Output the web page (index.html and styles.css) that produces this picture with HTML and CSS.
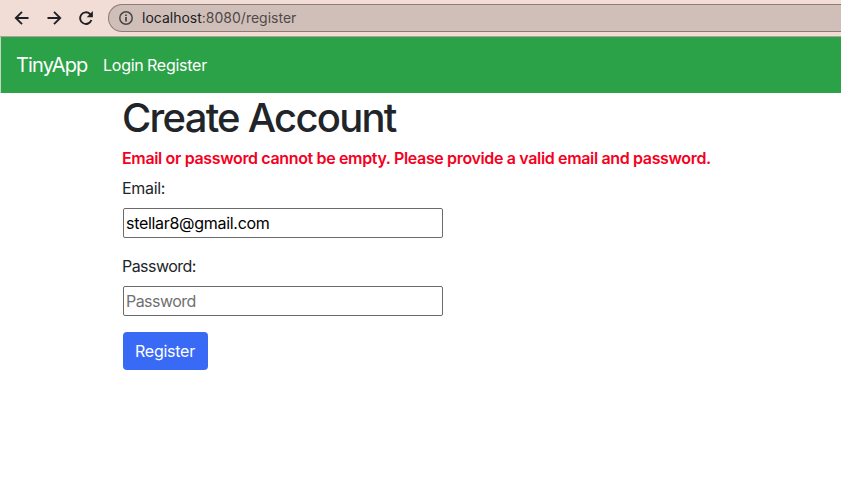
FILE: index.html
```html
<!DOCTYPE html>
<html lang="en">
<head>
<meta charset="utf-8">
<title>TinyApp</title>
<link rel="stylesheet" href="styles.css">
</head>
<body>
<header class="browser">
  <svg class="icon back" viewBox="0 0 16 16"><path d="M14.5 8H2M8 1.8 1.8 8 8 14.2"/></svg>
  <svg class="icon forward" viewBox="0 0 16 16"><path d="M1.5 8H14M8 1.8 14.2 8 8 14.2"/></svg>
  <svg class="icon reload" viewBox="0 0 16 16"><path d="M13.4 10A5.8 5.8 0 1 1 12 4L14 6"/><path class="solid" d="M14.9 1v6.2H8.7z"/></svg>
  <div class="address">
    <svg class="info" viewBox="0 0 14 14"><circle cx="7" cy="7" r="6.2"/><path class="stem" d="M7 6v4.4M7 3.4v1.7"/></svg>
    <span class="url">localhost<span class="path">:8080/register</span></span>
  </div>
</header>
<nav class="navbar">
  <a class="brand">TinyApp</a>
  <a class="link login">Login</a>
  <a class="link register">Register</a>
</nav>
<main class="content">
  <h1>Create Account</h1>
  <p class="error">Email or password cannot be empty. Please provide a valid email and password.</p>
  <form>
    <label for="email">Email:</label>
    <input id="email" type="text" value="stellar8@gmail.com">
    <label class="tight" for="password">Password:</label>
    <input class="tight" id="password" type="password" placeholder="Password">
    <button type="button">Register</button>
  </form>
</main>
</body>
</html>
```
FILE: styles.css
```css
* { box-sizing: border-box; }
body { margin: 0; background: #fff; color: #212529; font: 16px/24px Inter, sans-serif; letter-spacing: -0.3px; overflow: hidden; }
.browser { height: 37px; display: flex; align-items: flex-start; background: #f1ddd6; padding: 4px 0 0 14px; border-bottom: 1px solid #b0a09b; }
.icon { width: 16px; height: 16px; margin: 6px 16px 0 0; fill: none; stroke: #202124; stroke-width: 1.9; }
.reload { margin-right: 14px; }
.icon .solid { fill: #202124; stroke: none; }
.address { flex: 1; height: 28px; border: 1px solid #8b7c78; border-right: 0; border-radius: 14px 0 0 14px; background: #cfbfb8; display: flex; align-items: center; padding-left: 10px; }
.info { width: 14px; height: 14px; margin-right: 9px; fill: none; stroke: #4b4746; stroke-width: 1.5; }
.info .stem { stroke-width: 1.8; }
.url { font-size: 14px; letter-spacing: 0; color: #202124; }
.path { color: #4f4a49; }
.navbar { height: 56px; display: flex; align-items: center; padding-left: 15px; border-left: 1px solid #c5d6c5; background: #2ba148; color: #fff; }
.brand { width: 87px; font-size: 20px; letter-spacing: -0.85px; }
.login { width: 44px; }
.link { letter-spacing: -0.25px; }
.content { padding: 1px 0 0 122px; }
h1 { margin: 0 0 4px; font-size: 40px; line-height: 48px; font-weight: 500; letter-spacing: -1.75px; white-space: nowrap; }
.error { margin: 0 0 6px; color: #f50022; font-weight: 600; letter-spacing: -0.35px; white-space: nowrap; }
form { display: flex; flex-direction: column; align-items: flex-start; }
label { margin-bottom: 8px; }
input { width: 320px; height: 30px; margin: 0 0 16px 1px; border: 1px solid #6b6b6b; border-radius: 2px; padding: 1px 2px; font: inherit; letter-spacing: inherit; color: #000; background: #fff; }
.tight { letter-spacing: -0.55px; }
input::placeholder { color: #707070; opacity: 1; }
button { height: 38px; width: 85px; margin-left: 1px; padding: 0 1px 0 0; border: 0; border-radius: 4px; background: #396af6; color: #fff; font: inherit; letter-spacing: -0.25px; }
```
